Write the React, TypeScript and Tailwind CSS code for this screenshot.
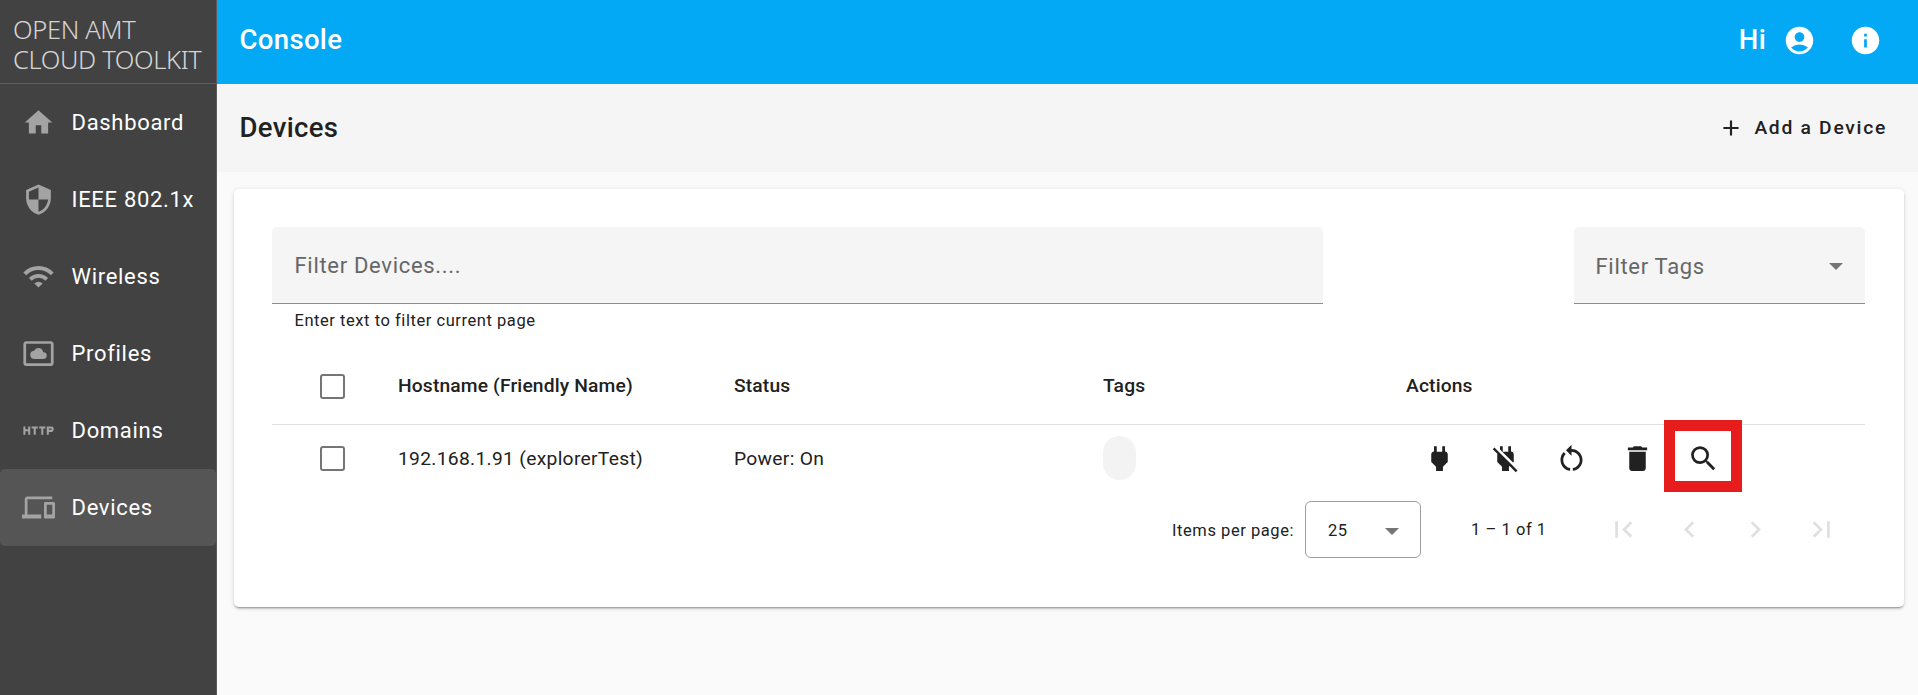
import {
  MdAccountCircle,
  MdAdd,
  MdChevronLeft,
  MdChevronRight,
  MdDelete,
  MdDevices,
  MdFirstPage,
  MdHome,
  MdHttp,
  MdInfo,
  MdLastPage,
  MdPower,
  MdPowerOff,
  MdRestartAlt,
  MdSearch,
  MdSecurity,
  MdSettingsSystemDaydream,
  MdWifi,
} from "react-icons/md";
import type { IconType } from "react-icons";

const navItems: { label: string; icon: IconType; active?: boolean }[] = [
  { label: "Dashboard", icon: MdHome },
  { label: "IEEE 802.1x", icon: MdSecurity },
  { label: "Wireless", icon: MdWifi },
  { label: "Profiles", icon: MdSettingsSystemDaydream },
  { label: "Domains", icon: MdHttp },
  { label: "Devices", icon: MdDevices, active: true },
];

const pagerIcons: IconType[] = [MdFirstPage, MdChevronLeft, MdChevronRight, MdLastPage];

function Checkbox() {
  return <span className="ml-12 block size-[25px] rounded-[3px] border-2 border-[#757575]" />;
}

function Caret() {
  return (
    <svg className="h-[7px] w-[14px] fill-[#757575]" viewBox="0 0 14 7">
      <path d="M0 0h14L7 7z" />
    </svg>
  );
}

function Sidebar() {
  return (
    <nav className="flex w-[217px] shrink-0 flex-col border-r border-[#5c5c5c] bg-[#424242]">
      <div className="h-[84px] border-b border-[#5e5e5e] pt-[14px] pl-[13px] font-['Noto_Sans',sans-serif] text-[25.5px] font-[350] tracking-[-0.35px] whitespace-nowrap text-[#d6d6d6]">
        <div className="leading-[30px]">OPEN AMT</div>
        <div className="leading-[30px]">CLOUD TOOLKIT</div>
      </div>
      {navItems.map(({ label, icon: Icon, active }) => (
        <a
          key={label}
          className={
            active
              ? "flex h-[77px] items-center rounded-[5px] bg-[#555555] pl-[22px] text-white"
              : "flex h-[77px] items-center pl-[22px] text-white"
          }
        >
          <Icon className="size-[33px] text-[#a3a3a3]" />
          <span className="ml-[16.5px] text-[22px] leading-[33px] tracking-[0.69px] whitespace-nowrap">{label}</span>
        </a>
      ))}
    </nav>
  );
}

function ActionIcons() {
  return (
    <div className="flex items-center">
      {[MdPower, MdPowerOff, MdRestartAlt, MdDelete].map((Icon, i) => (
        <button key={i} className="flex size-[66px] items-center justify-center">
          <Icon className="size-[33px]" />
        </button>
      ))}
      <button className="relative flex size-[66px] items-center justify-center">
        <MdSearch className="size-[33px]" />
        <span className="absolute top-[-5.5px] left-[-6.5px] h-[72px] w-[78px] border-[11.5px] border-[#e71c1c]" />
      </button>
    </div>
  );
}

function DeviceTable() {
  return (
    <div className="mt-[14px] text-[19.25px]">
      <div className="grid h-[77px] grid-cols-[126px_336px_369px_303px_1fr] items-center border-b border-[#e0e0e0] font-[480] tracking-[0.14px]">
        <Checkbox />
        <span>Hostname (Friendly Name)</span>
        <span>Status</span>
        <span>Tags</span>
        <span>Actions</span>
      </div>
      <div className="grid h-[67px] grid-cols-[126px_336px_369px_303px_1fr] items-center tracking-[0.3px]">
        <Checkbox />
        <span className="pt-px">192.168.1.91 (explorerTest)</span>
        <span className="pt-px">Power: On</span>
        <span className="mb-px h-11 w-[33px] rounded-full bg-[#f3f3f3]" />
        <ActionIcons />
      </div>
    </div>
  );
}

function Paginator() {
  return (
    <div className="mt-[9px] flex h-[57px] items-center justify-end pr-[11px] text-[16.5px] tracking-[0.55px]">
      <span className="pt-[3px]">Items per page:</span>
      <div className="ml-[11px] flex h-[57px] w-[116px] items-center justify-between rounded-[6px] border border-[#9e9e9e] pt-[3px] pr-[21px] pl-[22px]">
        <span>25</span>
        <Caret />
      </div>
      <span className="ml-[50px] w-[119px] pt-px">1 – 1 of 1</span>
      {pagerIcons.map((Icon, i) => (
        <button key={i} className="flex size-[66px] items-center justify-center text-[#e0e0e0]">
          <Icon className="size-[33px]" />
        </button>
      ))}
    </div>
  );
}

export default function App() {
  return (
    <div className="flex h-[695px] w-[1918px] overflow-hidden bg-[#fafafa] font-['Roboto',sans-serif] text-[#212121]">
      <Sidebar />
      <main className="flex min-w-0 flex-1 flex-col">
        <header className="flex h-[84px] items-center bg-[#03a9f4] pr-[36px] pl-[22.5px] text-white">
          <h1 className="flex-1 pb-1 text-[27.5px] font-medium tracking-[0.34px]">Console</h1>
          <span className="pb-1 text-[27.5px] font-medium tracking-[0.34px]">Hi</span>
          <MdAccountCircle className="mb-1 ml-[17px] size-[33px]" />
          <MdInfo className="mb-1 ml-[33px] size-[33px]" />
        </header>
        <div className="flex h-[88px] items-center bg-[#f5f5f5] pr-[31px] pl-[22.5px]">
          <h2 className="flex-1 text-[27.5px] font-medium tracking-[0.34px]">Devices</h2>
          <button className="flex items-center text-[19.25px] font-[480] tracking-[1.72px]">
            <MdAdd className="mr-2.5 size-[26px]" />
            Add a Device
          </button>
        </div>
        <section className="mt-[17px] mr-[14px] ml-[17px] h-[418px] rounded-[5px] bg-white pt-[38px] pr-[39px] pl-[38px] shadow-[0_3px_1px_-2px_rgba(0,0,0,0.2),0_2px_2px_0_rgba(0,0,0,0.14),0_1px_5px_0_rgba(0,0,0,0.12)]">
          <div className="flex items-start justify-between">
            <div className="w-[1051px]">
              <div className="flex h-[77px] items-center rounded-t-[5px] border-b border-[#8c8c8c] bg-[#f5f5f5] pl-[22.5px] text-[22px] tracking-[0.69px] text-[#666666]">
                Filter Devices....
              </div>
              <div className="pt-[3px] pl-[22.5px] text-[16.5px] leading-[27px] tracking-[0.55px]">
                Enter text to filter current page
              </div>
            </div>
            <div className="flex h-[77px] w-[291px] items-center justify-between rounded-t-[5px] border-b border-[#8c8c8c] bg-[#f5f5f5] pt-0.5 pr-[22px] pl-[21.5px] text-[22px] tracking-[0.69px] text-[#666666]">
              <span>Filter Tags</span>
              <Caret />
            </div>
          </div>
          <DeviceTable />
          <Paginator />
        </section>
      </main>
    </div>
  );
}
